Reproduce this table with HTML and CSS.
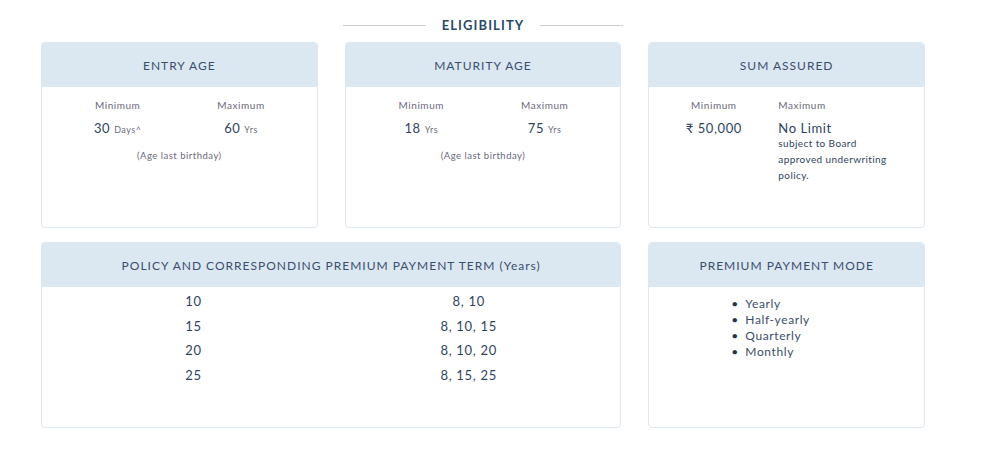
FILE: index.html
```html
<!DOCTYPE html>
<html lang="en">
<head>
<meta charset="utf-8">
<title>Eligibility</title>
<link rel="stylesheet" href="styles.css">
</head>
<body>
<section class="eligibility">
  <h2 class="section-title"><span class="rule"></span><span class="title-text">ELIGIBILITY</span><span class="rule"></span></h2>
  <div class="grid">
    <div class="card">
      <div class="card-head">ENTRY AGE</div>
      <div class="card-body">
        <div class="two-col">
          <div class="col">
            <div class="label">Minimum</div>
            <div class="value">30 <span class="unit">Days^</span></div>
          </div>
          <div class="col">
            <div class="label">Maximum</div>
            <div class="value">60 <span class="unit">Yrs</span></div>
          </div>
        </div>
        <div class="note">(Age last birthday)</div>
      </div>
    </div>
    <div class="card">
      <div class="card-head">MATURITY AGE</div>
      <div class="card-body">
        <div class="two-col">
          <div class="col">
            <div class="label">Minimum</div>
            <div class="value">18 <span class="unit">Yrs</span></div>
          </div>
          <div class="col">
            <div class="label">Maximum</div>
            <div class="value">75 <span class="unit">Yrs</span></div>
          </div>
        </div>
        <div class="note">(Age last birthday)</div>
      </div>
    </div>
    <div class="card">
      <div class="card-head">SUM ASSURED</div>
      <div class="card-body">
        <div class="sum-cols">
          <div class="col">
            <div class="label">Minimum</div>
            <div class="value">₹ 50,000</div>
          </div>
          <div class="col col-left">
            <div class="label">Maximum</div>
            <div class="value">No Limit</div>
            <div class="sub">subject to Board approved underwriting policy.</div>
          </div>
        </div>
      </div>
    </div>
    <div class="card wide">
      <div class="card-head">POLICY AND CORRESPONDING PREMIUM PAYMENT TERM (Years)</div>
      <div class="card-body term-body">
        <div class="term-table">
          <div class="cell">10</div><div class="cell">8, 10</div>
          <div class="cell">15</div><div class="cell">8, 10, 15</div>
          <div class="cell">20</div><div class="cell">8, 10, 20</div>
          <div class="cell">25</div><div class="cell">8, 15, 25</div>
        </div>
      </div>
    </div>
    <div class="card">
      <div class="card-head">PREMIUM PAYMENT MODE</div>
      <div class="card-body">
        <ul class="modes">
          <li>Yearly</li>
          <li>Half-yearly</li>
          <li>Quarterly</li>
          <li>Monthly</li>
        </ul>
      </div>
    </div>
  </div>
</section>
</body>
</html>
```
FILE: styles.css
```css
* { box-sizing: border-box; }
html, body { margin: 0; padding: 0; background: #fff; }
body {
  font-family: Lato, "Open Sans", "Liberation Sans", sans-serif;
  color: #34495e;
}
.eligibility {
  width: 884px;
  margin-left: 41px;
  padding-top: 16px;
}
.section-title {
  margin: 0 0 8px 0;
  display: flex;
  align-items: center;
  justify-content: center;
  gap: 16px;
  font-size: 13px;
  font-weight: 700;
  color: #2b4a6b;
  letter-spacing: 1.1px;
  height: 18px;
}
.rule {
  width: 83px;
  height: 1px;
  background: #cfcfcf;
}
.grid {
  display: grid;
  grid-template-columns: repeat(3, 1fr);
  column-gap: 27px;
  row-gap: 14px;
}
.card {
  border: 1px solid #dde8f1;
  border-radius: 4px;
  height: 186px;
  overflow: hidden;
  background: #fff;
}
.card.wide { grid-column: span 2; }
.card-head {
  background: #dbe8f2;
  height: 44px;
  display: flex;
  align-items: center;
  justify-content: center;
  font-size: 12px;
  color: #3b4d6d;
  letter-spacing: 1px;
}
.card-body {
  padding: 12px 14px;
}
.two-col {
  display: grid;
  grid-template-columns: 1fr 1fr;
  text-align: center;
}
.label {
  font-size: 10px;
  color: #6b687c;
  line-height: 12px;
  letter-spacing: 0.55px;
}
.value {
  margin-top: 9px;
  font-size: 13px;
  line-height: 16px;
  color: #2f4360;
  letter-spacing: 0.6px;
}
.unit {
  font-size: 9px;
  color: #6b6d7c;
  letter-spacing: 0.5px;
}
.note {
  margin-top: 12px;
  text-align: center;
  font-size: 9.5px;
  color: #6b687c;
  letter-spacing: 0.5px;
}
.sum-cols {
  display: grid;
  grid-template-columns: 129px 1fr;
  margin-left: -14px;
}
.sum-cols .col { text-align: center; }
.sum-cols .col-left { text-align: left; }
.sub {
  margin-top: -1px;
  font-size: 10px;
  line-height: 16px;
  color: #2f4360;
  width: 124px;
  letter-spacing: 0.4px;
}
.term-body { padding-top: 6px; }
.term-table {
  display: grid;
  grid-template-columns: 1fr 1fr;
  text-align: center;
  row-gap: 8px;
}
.cell {
  font-size: 13px;
  line-height: 16.5px;
  color: #2f4360;
  letter-spacing: 0.7px;
}
.modes {
  list-style: none;
  margin: -3px 0 0 68px;
  padding: 0;
  font-size: 12px;
  line-height: 16px;
  color: #3b4d6d;
  letter-spacing: 0.6px;
}
.modes li::before {
  content: "•";
  display: inline-block;
  width: 14px;
  color: #1f3550;
  letter-spacing: 0;
}
```
